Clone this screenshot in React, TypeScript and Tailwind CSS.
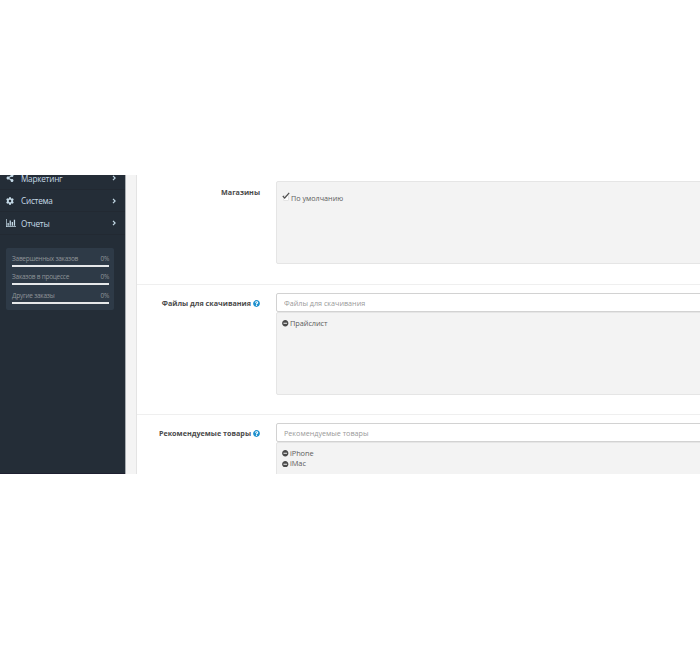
import type { ReactNode } from "react";
import {
  FaCog,
  FaMinusCircle,
  FaQuestionCircle,
  FaShareAlt,
} from "react-icons/fa";

function BarChartIcon() {
  return (
    <svg viewBox="0 0 20 16" className="w-[10px] h-[8px]" fill="currentColor">
      <path d="M0 0h1.4v14.6H20V16H0z" />
      <path d="M3 8h2.6v5.4H3zM7.2 3h2.6v10.4H7.2zM11.4 6h2.6v7.4h-2.6zM15.6 1.5h2.6v11.9h-2.6z" />
    </svg>
  );
}

function AngleRight() {
  return (
    <svg viewBox="0 0 5 8" className="ml-auto w-[5px] h-[8px]" fill="none">
      <path d="M1 1.9 3.1 4 1 6.1" stroke="currentColor" strokeWidth="1.2" />
    </svg>
  );
}

const menu = [
  { label: "Маркетинг", icon: <FaShareAlt className="w-2 h-2" />, gap: "ml-[7px]" },
  { label: "Система", icon: <FaCog className="w-2 h-2" />, gap: "ml-[7px]" },
  { label: "Отчеты", icon: <BarChartIcon />, gap: "ml-[5px]" },
];

const stats = [
  { label: "Завершенных заказов", value: 0 },
  { label: "Заказов в процессе", value: 0 },
  { label: "Другие заказы", value: 0 },
];

function Sidebar() {
  return (
    <aside className="w-[125px] shrink-0 bg-[#242d37] border-b border-[#1e1f30]">
      <ul className="-mt-[8px]">
        {menu.map((item) => (
          <li
            key={item.label}
            className="flex items-center h-[22.5px] pt-px pl-[6px] pr-[8px] border-b border-[#222932] text-[#c4d9e6]"
          >
            {item.icon}
            <span className={`${item.gap} pt-px text-[8.2px] leading-[12px] tracking-[-0.24px]`}>
              {item.label}
            </span>
            <AngleRight />
          </li>
        ))}
      </ul>
      <div className="mt-[13px] ml-[6px] w-[108px] h-[62px] rounded-[2px] bg-[#2e3a47] pl-[6px] pr-[5px] pt-[6px]">
        {stats.map((s) => (
          <div key={s.label} className="h-[18.7px]">
            <div className="flex justify-between h-[11px] leading-[10px] text-[6.5px] tracking-[-0.26px] text-[#8f9498]">
              <span>{s.label}</span>
              <span>{s.value}%</span>
            </div>
            <div className="h-[2px] bg-[#e6e8ea]" />
          </div>
        ))}
      </div>
    </aside>
  );
}

function Label({ text, help }: { text: string; help?: boolean }) {
  return (
    <div className="flex justify-end items-center w-[123px] h-[20px] shrink-0 font-bold text-[#4a4a4a] whitespace-nowrap">
      {text}
      {help && <FaQuestionCircle className="ml-[2px] w-[7px] h-[7px] text-[#1e91cf]" />}
    </div>
  );
}

function Well({ children }: { children: ReactNode }) {
  return (
    <div className="h-[83px] rounded-[2px] border border-[#e5e5e5] bg-[#f3f3f3] px-[5px] pt-[5px]">
      {children}
    </div>
  );
}

function Picker({ label, items }: { label: string; items: string[] }) {
  return (
    <div className="flex h-[130px] border-t border-[#efefef] pt-[8px]">
      <Label text={label} help />
      <div className="ml-[16px] w-[440px] shrink-0">
        <input
          className="block w-full h-[19px] rounded-[2px] border border-[#d2d2d2] bg-white px-[7px] pt-px placeholder:text-[#999]"
          placeholder={label}
        />
        <Well>
          {items.map((item) => (
            <div key={item} className="flex items-center h-[10.5px] text-[7.4px] tracking-[-0.08px] text-[#5c5c5c]">
              <FaMinusCircle className="w-[6.5px] h-[6.5px] mr-[1.5px] text-[#4a4a4a]" />
              {item}
            </div>
          ))}
        </Well>
      </div>
    </div>
  );
}

export default function App() {
  return (
    <div className="h-[650px] bg-white pt-[175px] overflow-hidden font-['Open_Sans','Noto_Sans',sans-serif] text-[7.2px]">
      <div className="flex h-[299px] overflow-hidden">
        <Sidebar />
        <div className="w-[12px] shrink-0 bg-[#f4f4f4] border-l border-l-[#a9adb1] border-r border-r-[#e4e4e4]" />
        <main className="flex-1 min-w-0 overflow-hidden bg-white">
          <div className="flex h-[109px] pt-[6px]">
            <div className="pt-[1px]">
              <Label text="Магазины" />
            </div>
            <div className="ml-[16px] w-[440px] shrink-0">
              <Well>
                <label className="flex items-center h-[10px] mt-[6px] text-[#5c5c5c]">
                  <span className="relative w-[6px] h-[6px] ml-px mr-[2px] rounded-[1px] border border-[#e4e4e4] bg-white">
                    <svg viewBox="0 0 8 7" className="absolute -left-[2px] -top-[4px] w-[8px] h-[7px]" fill="none">
                      <path d="M.8 4 2.7 6 7.2.8" stroke="#505050" strokeWidth="1.2" />
                    </svg>
                  </span>
                  По умолчанию
                </label>
              </Well>
            </div>
          </div>
          <Picker label="Файлы для скачивания" items={["Прайслист"]} />
          <Picker label="Рекомендуемые товары" items={["iPhone", "iMac"]} />
        </main>
      </div>
    </div>
  );
}
